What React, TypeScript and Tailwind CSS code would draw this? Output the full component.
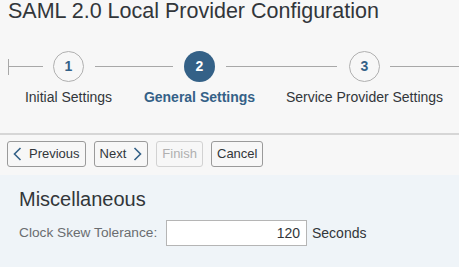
import type { ReactNode } from 'react'

const font = { fontFamily: '"Liberation Sans", Arial, sans-serif' }

function Step({ n, label, active }: { n: number; label: string; active?: boolean }) {
  return (
    <div className="flex w-[31px] shrink-0 flex-col items-center">
      <div
        className={
          active
            ? 'flex h-[31px] w-[31px] items-center justify-center rounded-full bg-[#346187] text-[14px] font-bold text-white'
            : 'flex h-[31px] w-[31px] items-center justify-center rounded-full border border-[#b0b0b0] bg-[#f7f7f7] text-[14px] font-bold text-[#346187]'
        }
      >
        {n}
      </div>
      <div
        className={
          active
            ? 'mt-[5px] whitespace-nowrap text-[14px] leading-[20px] font-bold text-[#346187]'
            : 'mt-[5px] whitespace-nowrap text-[14px] leading-[20px] text-[#32363a]'
        }
      >
        {label}
      </div>
    </div>
  )
}

function Line({ w }: { w?: string }) {
  return <div className={`mt-[15px] h-px bg-[#a8a8a8] ${w ?? 'flex-1'}`} />
}

function Btn({ children, disabled }: { children: ReactNode; disabled?: boolean }) {
  return (
    <button
      className={
        disabled
          ? 'flex h-[26px] items-center rounded-[3px] border border-[#d2d2d2] px-[5px] text-[13px] text-[#b0b0b0]'
          : 'flex h-[26px] items-center rounded-[3px] border border-[#9a9a9a] bg-[#f7f7f7] px-[5px] text-[13px] text-[#32363a]'
      }
    >
      {children}
    </button>
  )
}

function Chevron({ dir }: { dir: 'left' | 'right' }) {
  return (
    <svg width="9" height="14" viewBox="0 0 9 14" className="text-[#346187]" aria-hidden>
      <path
        d={dir === 'left' ? 'M7.5 1 L1.5 7 L7.5 13' : 'M1.5 1 L7.5 7 L1.5 13'}
        fill="none"
        stroke="currentColor"
        strokeWidth="1.6"
      />
    </svg>
  )
}

export default function App() {
  return (
    <div className="h-[267px] w-[459px] overflow-hidden bg-[#f7f7f7]" style={font}>
      {/* Title */}
      <div className="pl-[8px] text-[21.5px] leading-[22px] whitespace-nowrap text-[#32363a]">
        SAML 2.0 Local Provider Configuration
      </div>

      {/* Wizard steps */}
      <div className="mt-[29px] flex h-[82px] pl-[8px]">
        <div className="mt-[8px] h-[16px] w-px bg-[#a8a8a8]" />
        <Line w="w-[34px]" />
        <div className="w-[10px]" />
        <Step n={1} label="Initial Settings" />
        <div className="w-[11px]" />
        <Line w="w-[78px]" />
        <div className="w-[11px]" />
        <Step n={2} label="General Settings" active />
        <div className="w-[11px]" />
        <Line w="w-[111px]" />
        <div className="w-[12px]" />
        <Step n={3} label="Service Provider Settings" />
        <div className="w-[10px]" />
        <Line />
      </div>

      <div className="h-[2px] bg-[#d6d6d6]" />

      {/* Toolbar */}
      <div className="flex gap-[8px] px-[7px] pt-[6px] pb-[8px]">
        <Btn>
          <span className="mr-[7px]">
            <Chevron dir="left" />
          </span>
          Previous
        </Btn>
        <Btn>
          Next
          <span className="ml-[7px]">
            <Chevron dir="right" />
          </span>
        </Btn>
        <Btn disabled>Finish</Btn>
        <Btn>Cancel</Btn>
      </div>

      {/* Form */}
      <div className="h-full bg-[#eff4f8] px-[19px] pt-[12px]">
        <div className="text-[20px] leading-[24px] text-[#32363a]">Miscellaneous</div>
        <div className="mt-[9px] flex items-center">
          <div className="w-[147px] text-[13.7px] text-[#6a6d70]">Clock Skew Tolerance:</div>
          <div className="flex h-[26px] w-[141px] items-center justify-end border border-[#b5b5b5] bg-white pr-[6px] text-[14px] text-[#32363a]">
            120
          </div>
          <div className="ml-[5px] text-[14px] text-[#32363a]">Seconds</div>
        </div>
      </div>
    </div>
  )
}
